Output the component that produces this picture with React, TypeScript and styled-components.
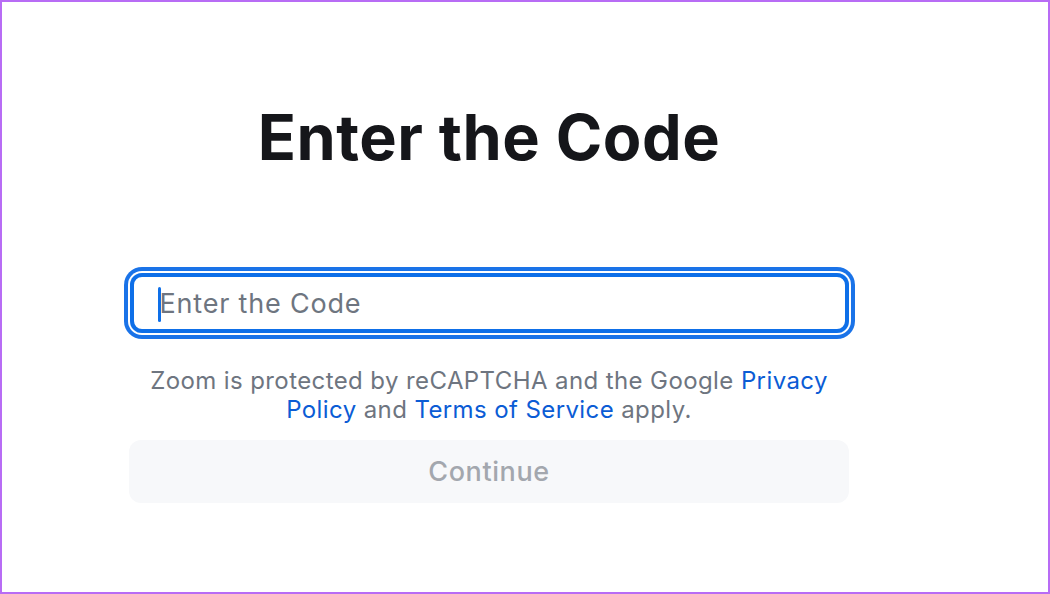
import React, { useState } from "react";
import styled, { createGlobalStyle } from "styled-components";

const GlobalStyle = createGlobalStyle`
  html, body {
    margin: 0;
    padding: 0;
    background: #ffffff;
  }
  * {
    box-sizing: border-box;
  }
`;

const Frame = styled.div`
  width: 1050px;
  height: 594px;
  border: 2px solid #b86cf5;
  background: #ffffff;
  font-family: Inter, "Noto Sans", sans-serif;
  padding-left: 127px;
  overflow: hidden;
`;

const Column = styled.div`
  width: 720px;
  display: flex;
  flex-direction: column;
  align-items: center;
`;

const Title = styled.h1`
  margin: 99px 0 0;
  font-size: 63px;
  line-height: 72px;
  font-weight: 700;
  color: #15161a;
  letter-spacing: 0.5px;
`;

const Field = styled.div`
  position: relative;
  width: 719px;
  margin-top: 100px;
  border-radius: 12px;
  box-shadow: 0 0 0 2px #ffffff, 0 0 0 6px #1a73e8;
`;

const Input = styled.input`
  display: block;
  width: 100%;
  height: 60px;
  border: 4px solid #0e6fe8;
  border-radius: 12px;
  padding: 0 0 0 26px;
  font-family: inherit;
  font-size: 27px;
  letter-spacing: 0.8px;
  color: #15161a;
  outline: none;
  background: #ffffff;

  &::placeholder {
    color: #6e7580;
  }
`;

const Caret = styled.span`
  position: absolute;
  left: 28px;
  top: 14px;
  width: 3px;
  height: 35px;
  border-radius: 2px;
  background: #0e6fe8;
`;

const Notice = styled.div`
  margin-top: 33px;
  display: flex;
  flex-direction: column;
  align-items: center;
  font-size: 24px;
  line-height: 29px;
  letter-spacing: 0.4px;
  color: #6e7580;
  white-space: nowrap;
`;

const NoticeLine = styled.span`
  display: block;
`;

const Link = styled.a`
  color: #0b5cd5;
  text-decoration: none;
`;

const ContinueButton = styled.button`
  width: 720px;
  height: 63px;
  margin-top: 16px;
  border: none;
  border-radius: 12px;
  background: #f7f8fa;
  color: #a3a7ae;
  font-family: inherit;
  font-size: 27px;
  font-weight: 500;
  letter-spacing: 0.6px;
  cursor: not-allowed;
`;

const App: React.FC = () => {
  const [code, setCode] = useState("");

  return (
    <>
      <GlobalStyle />
      <Frame>
        <Column>
          <Title>Enter the Code</Title>
          <Field>
            <Input
              placeholder="Enter the Code"
              value={code}
              onChange={(e) => setCode(e.target.value)}
            />
            {code === "" && <Caret />}
          </Field>
          <Notice>
            <NoticeLine>
              Zoom is protected by reCAPTCHA and the Google{" "}
              <Link href="#">Privacy</Link>
            </NoticeLine>
            <NoticeLine>
              <Link href="#">Policy</Link> and{" "}
              <Link href="#">Terms of Service</Link> apply.
            </NoticeLine>
          </Notice>
          <ContinueButton disabled={code === ""}>Continue</ContinueButton>
        </Column>
      </Frame>
    </>
  );
};

export default App;
